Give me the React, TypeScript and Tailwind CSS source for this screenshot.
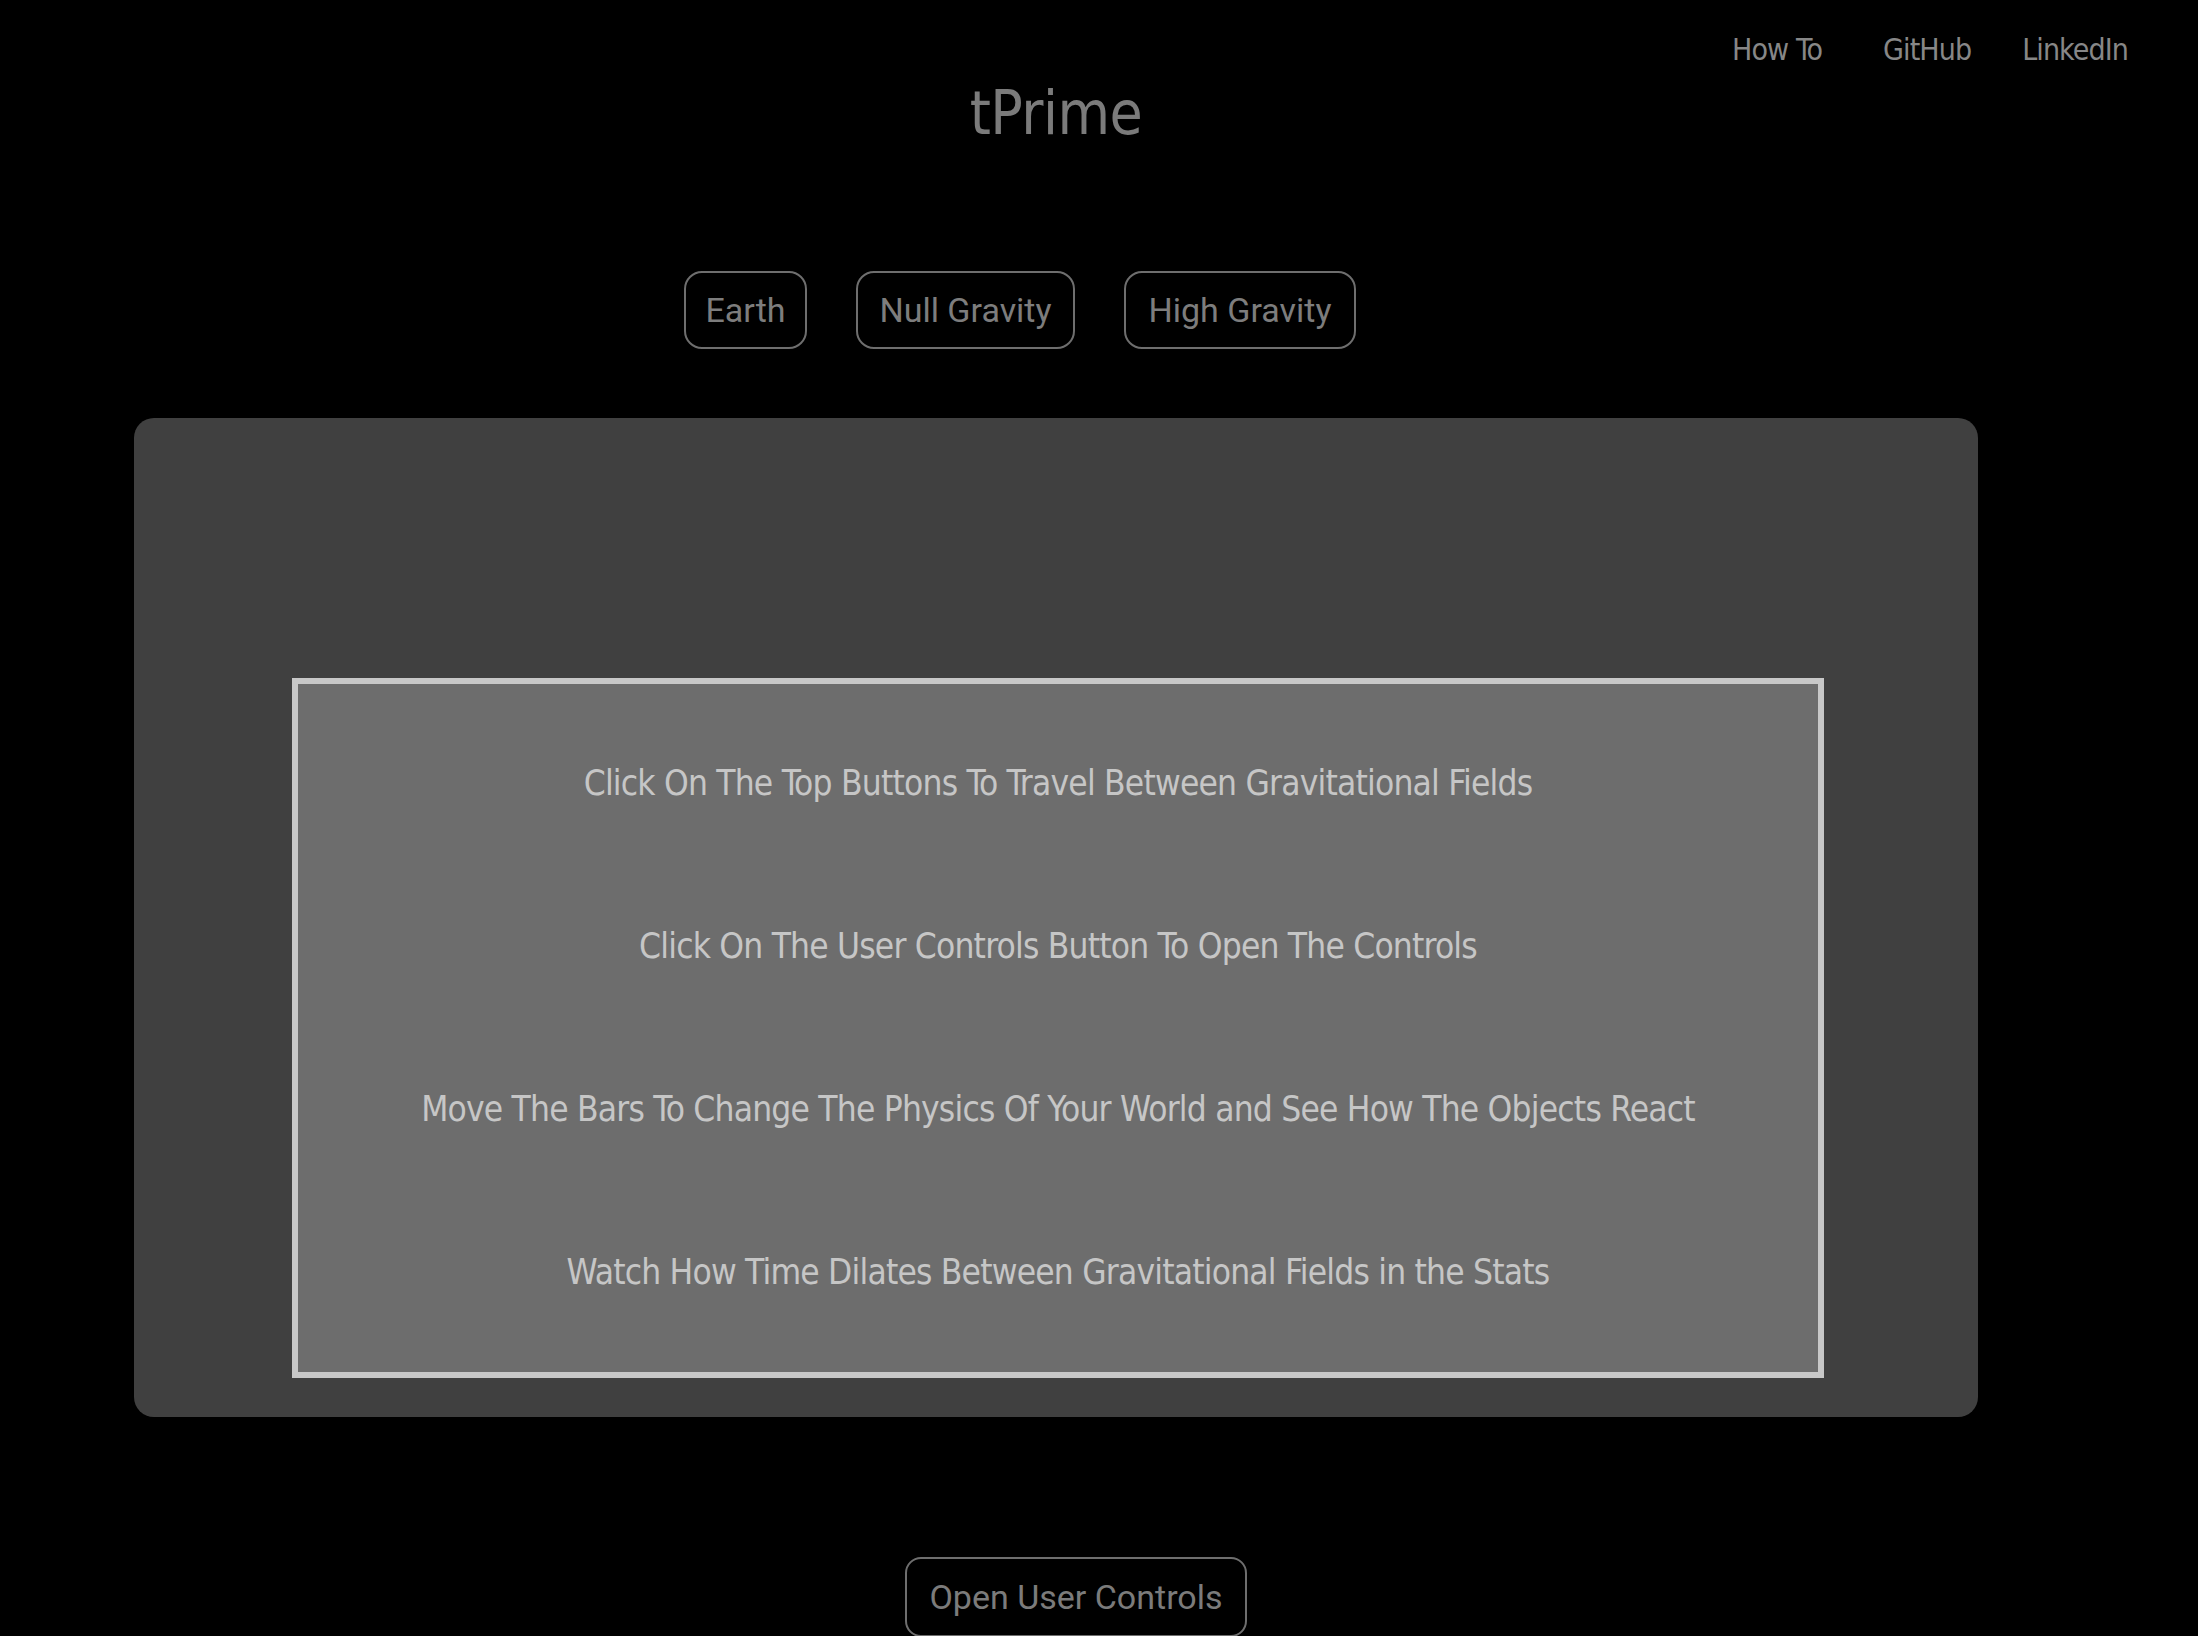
import { useState } from "react";

const navLinks = [
  { label: "How To", cls: "mr-[61px]" },
  { label: "GitHub", cls: "mr-[51px]" },
  { label: "LinkedIn", cls: "" },
];

const worlds = [
  { id: "earth", label: "Earth", width: "w-[123px]" },
  { id: "null", label: "Null Gravity", width: "w-[219px]" },
  { id: "high", label: "High Gravity", width: "w-[232px]" },
];

const steps = [
  "Click On The Top Buttons To Travel Between Gravitational Fields",
  "Click On The User Controls Button To Open The Controls",
  "Move The Bars To Change The Physics Of Your World and See How The Objects React",
  "Watch How Time Dilates Between Gravitational Fields in the Stats",
];

export default function App() {
  const [world, setWorld] = useState("earth");
  const [controlsOpen, setControlsOpen] = useState(false);

  return (
    <div className="min-h-screen bg-black overflow-hidden font-['Liberation_Sans_Narrow','DejaVu_Sans_Condensed',Roboto,sans-serif]">
      {/* Top links */}
      <nav className="flex justify-end pt-[30px] pr-[70px]">
        {navLinks.map((link) => (
          <a key={link.label} href="#" className={`text-[30px] leading-[40px] tracking-[-0.9px] text-[#878787] ${link.cls}`}>
            {link.label}
          </a>
        ))}
      </nav>

      <h1 className="ml-[134px] w-[1844px] mt-[8px] text-center text-[60px] leading-[70px] tracking-[-0.5px] text-[#7b7b7b]">tPrime</h1>

      {/* Gravity presets */}
      <div className="flex gap-[49px] ml-[684px] mt-[123px]">
        {worlds.map((w) => (
          <button
            key={w.id}
            onClick={() => setWorld(w.id)}
            className={`${w.width} h-[78px] rounded-[18px] border-2 border-[#6e6e6e] bg-black text-[#7d7d7d] text-[34px] font-['Roboto',sans-serif] flex items-center justify-center`}
          >
            {w.label}
          </button>
        ))}
      </div>

      {/* World canvas */}
      <section
        data-world={world}
        className="ml-[134px] mt-[69px] w-[1844px] h-[999px] rounded-[20px] bg-[#404040] pt-[260px] pl-[158px]"
      >
        <div className="w-[1532px] h-[700px] border-[6px] border-[#c8c8c8] bg-[#6d6d6d] flex flex-col items-center pt-[75px] gap-[115px]">
          {steps.map((s) => (
            <p key={s} className="text-[35px] leading-[48px] tracking-[-0.8px] text-[#c6c6c6] text-center">
              {s}
            </p>
          ))}
        </div>
      </section>

      <button
        onClick={() => setControlsOpen(!controlsOpen)}
        className="ml-[905px] mt-[140px] w-[342px] h-[80px] rounded-[16px] border-2 border-[#6e6e6e] bg-black text-[#7b7b7b] text-[34px] font-['Roboto',sans-serif] flex items-center justify-center"
      >
        {controlsOpen ? "Close User Controls" : "Open User Controls"}
      </button>
    </div>
  );
}
